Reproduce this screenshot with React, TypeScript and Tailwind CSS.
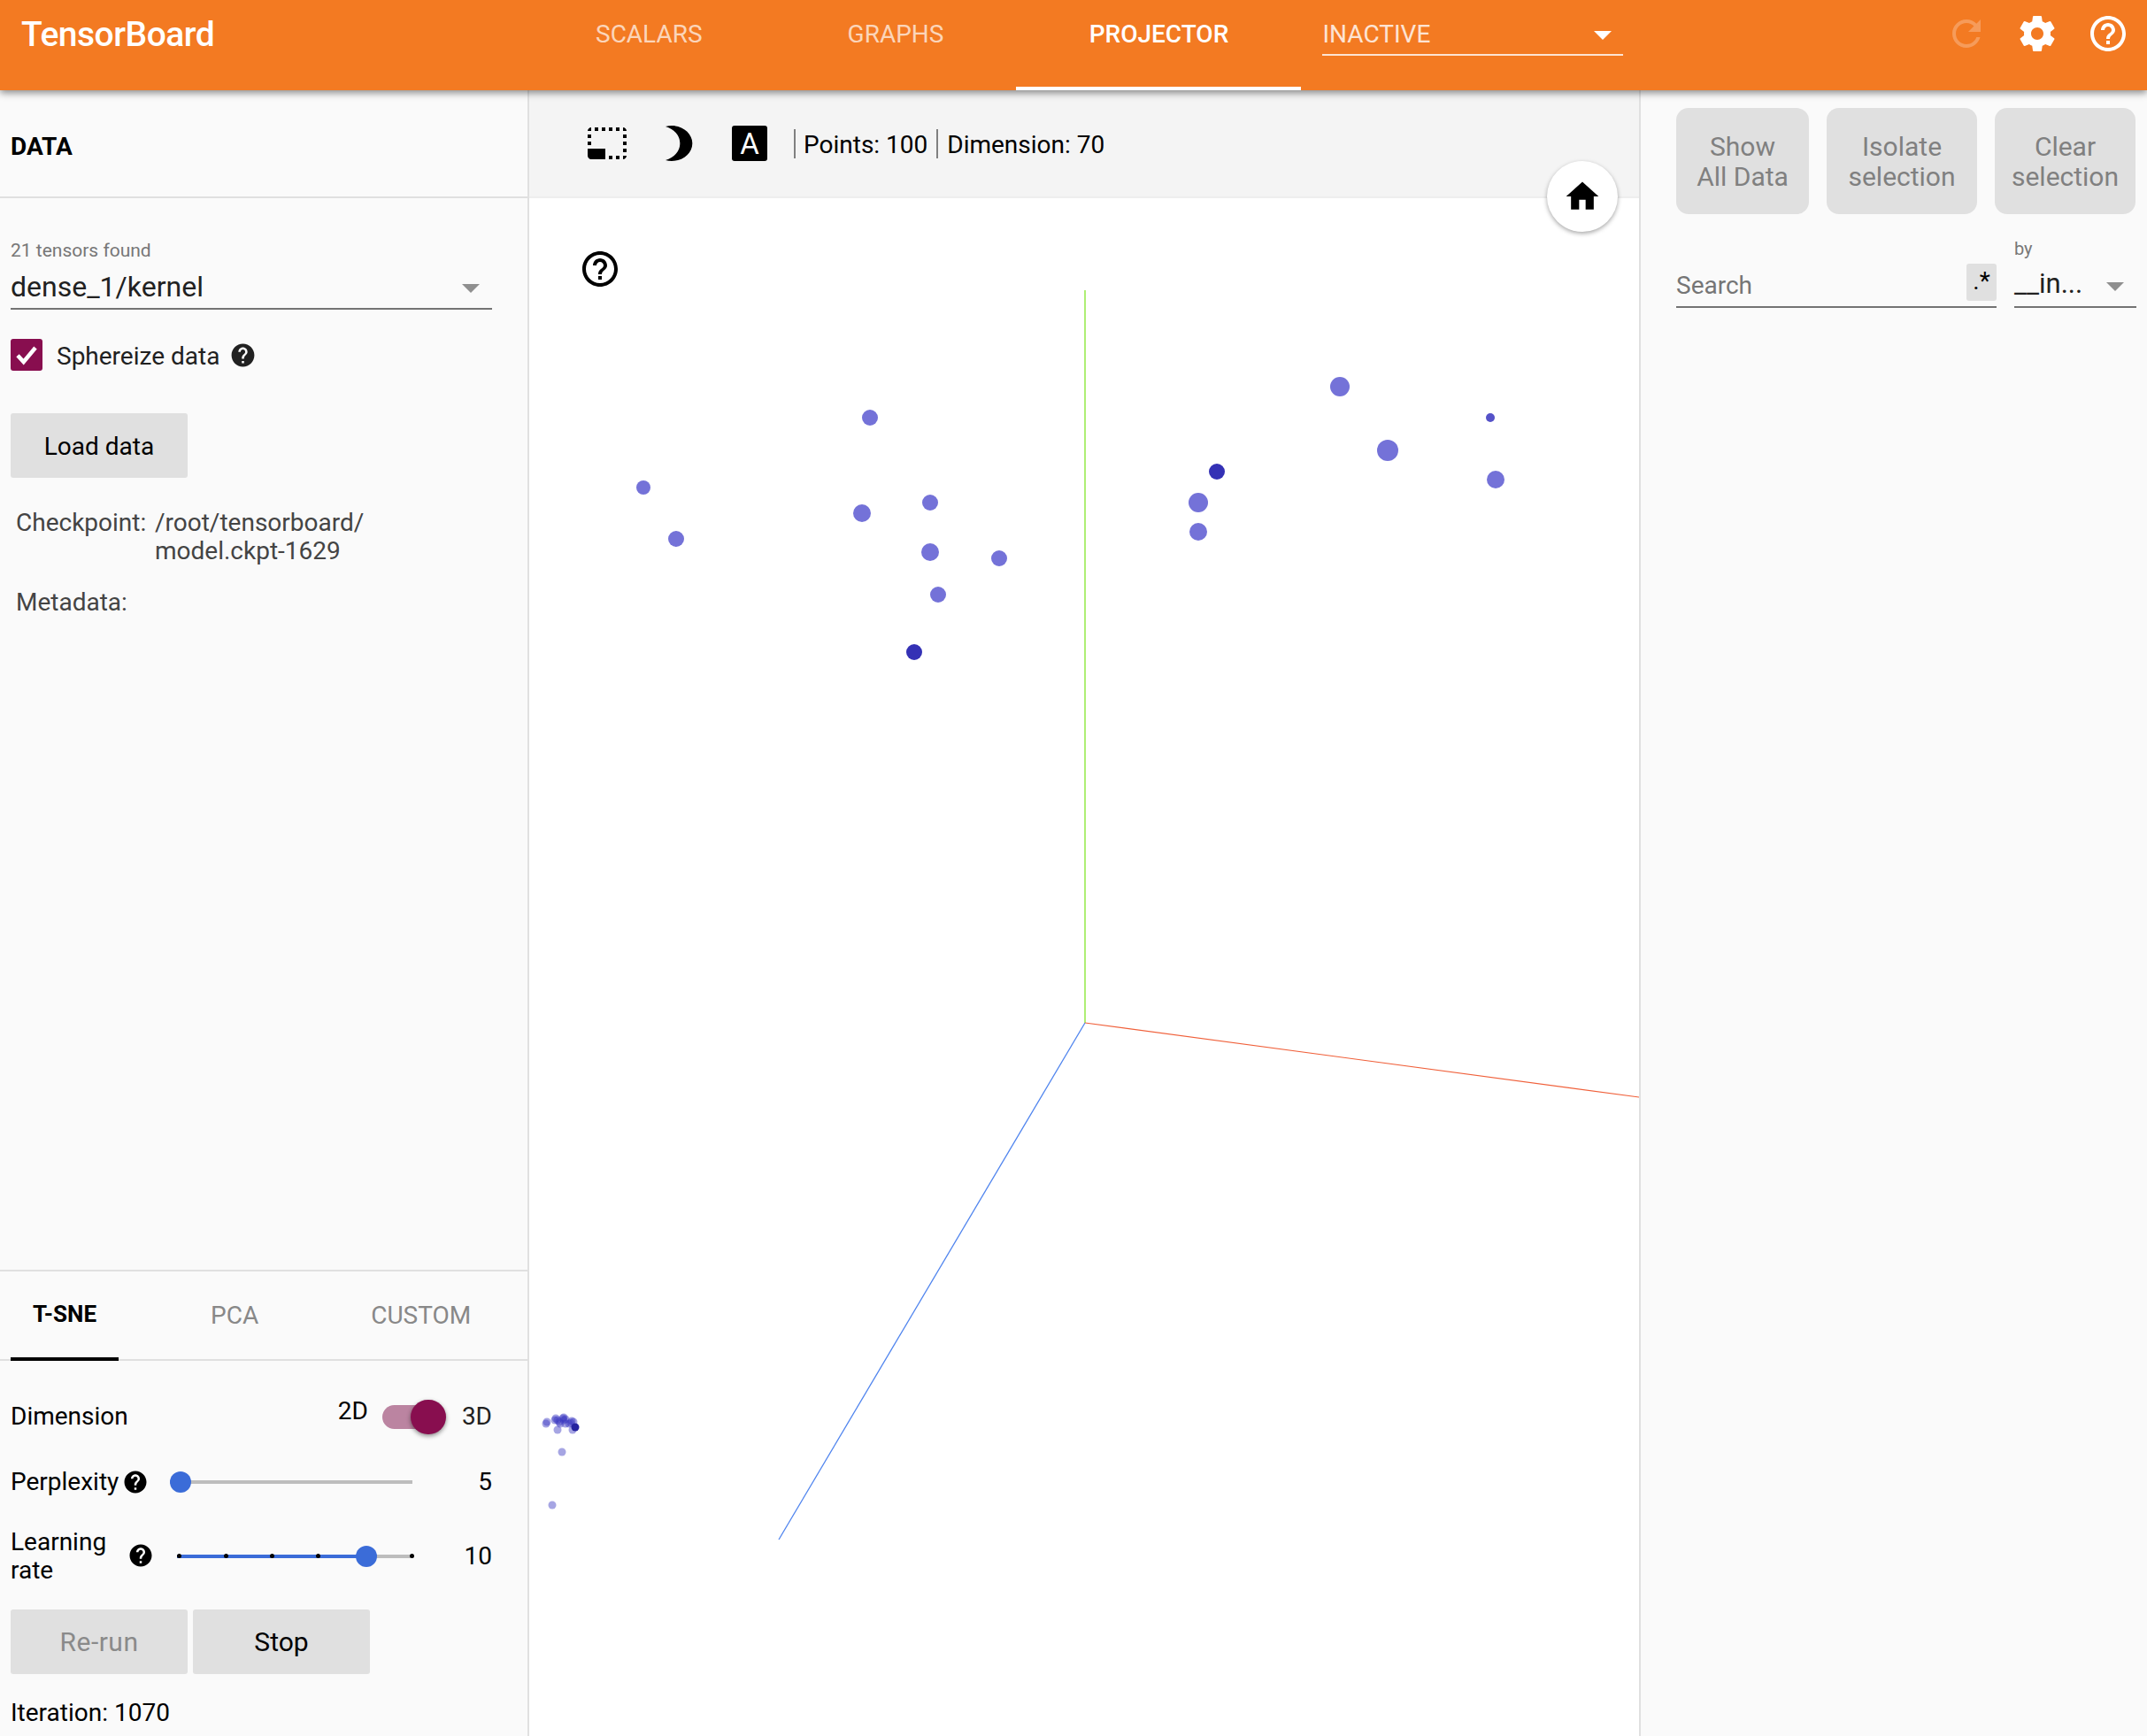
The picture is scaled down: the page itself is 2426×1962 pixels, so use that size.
// App.tsx
import React from 'react';

const HELP = 'M12 2C6.48 2 2 6.48 2 12s4.48 10 10 10 10-4.48 10-10S17.52 2 12 2zm1 17h-2v-2h2v2zm2.07-7.75l-.9.92C13.45 12.9 13 13.5 13 15h-2v-.5c0-1.1.45-2.1 1.17-2.83l1.24-1.26c.37-.36.59-.86.59-1.41 0-1.1-.9-2-2-2s-2 .9-2 2H8c0-2.21 1.79-4 4-4s4 1.79 4 4c0 .88-.36 1.68-.93 2.25z';
const HELP_OUTLINE = 'M11 18h2v-2h-2v2zm1-16C6.48 2 2 6.48 2 12s4.48 10 10 10 10-4.48 10-10S17.52 2 12 2zm0 18c-4.41 0-8-3.59-8-8s3.59-8 8-8 8 3.59 8 8-3.59 8-8 8zm0-14c-2.21 0-4 1.79-4 4h2c0-1.1.9-2 2-2s2 .9 2 2c0 2-3 1.75-3 5h2c0-2.25 3-2.5 3-5 0-2.21-1.79-4-4-4z';
const GEAR = 'M19.43 12.98c.04-.32.07-.64.07-.98s-.03-.66-.07-.98l2.11-1.65c.19-.15.24-.42.12-.64l-2-3.46c-.12-.22-.39-.3-.61-.22l-2.49 1c-.52-.4-1.08-.73-1.69-.98l-.38-2.65C14.46 2.18 14.25 2 14 2h-4c-.25 0-.46.18-.49.42l-.38 2.65c-.61.25-1.17.59-1.69.98l-2.49-1c-.23-.09-.49 0-.61.22l-2 3.46c-.13.22-.07.49.12.64l2.11 1.65c-.04.32-.07.65-.07.98s.03.66.07.98l-2.11 1.65c-.19.15-.24.42-.12.64l2 3.46c.12.22.39.3.61.22l2.49-1c.52.4 1.08.73 1.69.98l.38 2.65c.03.24.24.42.49.42h4c.25 0 .46-.18.49-.42l.38-2.65c.61-.25 1.17-.59 1.69-.98l2.49 1c.23.09.49 0 .61-.22l2-3.46c.12-.22.07-.49-.12-.64l-2.11-1.65zM12 15.5c-1.93 0-3.5-1.57-3.5-3.5s1.57-3.5 3.5-3.5 3.5 1.57 3.5 3.5-1.57 3.5-3.5 3.5z';
const REFRESH = 'M17.65 6.35C16.2 4.9 14.21 4 12 4c-4.42 0-7.99 3.58-7.99 8s3.57 8 7.99 8c3.73 0 6.84-2.55 7.73-6h-2.08c-.82 2.33-3.04 4-5.65 4-3.31 0-6-2.69-6-6s2.69-6 6-6c1.66 0 3.14.69 4.22 1.78L13 11h7V4l-2.35 2.35z';
const SELECT = 'M23 15h-2v2h2v-2zm0-4h-2v2h2v-2zm0 8h-2v2c1 0 2-1 2-2zM15 3h-2v2h2V3zm8 4h-2v2h2V7zm-2-4v2h2c0-1-1-2-2-2zM3 21h8v-6H1v4c0 1.1.9 2 2 2zM3 7H1v2h2V7zm12 12h-2v2h2v-2zm4-16h-2v2h2V3zm0 16h-2v2h2v-2zM3 3C2 3 1 4 1 5h2V3zm0 8H1v2h2v-2zm8-8H9v2h2V3zM7 3H5v2h2V3z';
const MOON = 'M9 2c-1.05 0-2.05.16-3 .46 4.06 1.27 7 5.06 7 9.54 0 4.48-2.94 8.27-7 9.54.95.3 1.95.46 3 .46 5.52 0 10-4.48 10-10S14.52 2 9 2z';
const HOME = 'M10 20v-6h4v6h5v-8h3L12 3 2 12h3v8z';

function Icon({ d, className }: { d: string; className?: string }) {
    return (
        <svg viewBox="0 0 24 24" fill="currentColor" className={className} preserveAspectRatio="none">
            <path d={d} />
        </svg>
    );
}

// canvas points, in page pixels relative to the projector panel
const points = [
    { x: 385, y: 370, r: 9, c: '#7472d8' },
    { x: 129, y: 449, r: 8, c: '#7472d8' },
    { x: 166, y: 507, r: 9, c: '#7472d8' },
    { x: 376, y: 478, r: 10, c: '#7472d8' },
    { x: 453, y: 466, r: 9, c: '#7472d8' },
    { x: 453, y: 522, r: 10, c: '#7472d8' },
    { x: 531, y: 529, r: 9, c: '#7472d8' },
    { x: 462, y: 570, r: 9, c: '#7472d8' },
    { x: 435, y: 635, r: 9, c: '#3431b5' },
    { x: 916, y: 335, r: 11, c: '#7472d8' },
    { x: 970, y: 407, r: 12, c: '#7472d8' },
    { x: 1086, y: 370, r: 5, c: '#5552c8' },
    { x: 1092, y: 440, r: 10, c: '#7472d8' },
    { x: 777, y: 431, r: 9, c: '#3431b5' },
    { x: 756, y: 466, r: 11, c: '#7472d8' },
    { x: 756, y: 499, r: 10, c: '#7472d8' },
];

// the far away cluster in the lower left corner
const cluster = [
    [19, 1507], [20, 1505], [30, 1501], [29, 1503], [32, 1503], [39, 1500], [39, 1503], [38, 1501], [41, 1502], [34, 1505],
    [48, 1504], [47, 1506], [50, 1505], [41, 1507], [35, 1507], [45, 1507], [32, 1514], [49, 1514], [37, 1539], [26, 1599],
];

function SliderRow({ children }: { children: React.ReactNode }) {
    return <div className="flex items-center text-black">{children}</div>;
}

export default function App() {
    return (
        <div className="flex h-[1962px] w-[2426px] flex-col overflow-hidden bg-white font-['Roboto',sans-serif] text-[28px]">
            <header className="relative z-10 flex h-[102px] shrink-0 bg-[#f37a22] shadow-[0_3px_8px_rgba(0,0,0,0.45)]">
                <div className="w-[591px] shrink-0 pl-6 pt-[16px] text-[39px] font-medium leading-[46px] tracking-[-0.5px] text-white">TensorBoard</div>
                <div className="flex">
                    <div className="h-full px-[82px] pt-[22px] text-[28px] leading-[34px] text-white/70">SCALARS</div>
                    <div className="h-full px-[82px] pt-[22px] text-[28px] leading-[34px] text-white/70">GRAPHS</div>
                    <div className="h-full w-[322px] border-b-4 border-white pt-[22px] text-center text-[28px] font-medium leading-[34px] text-white">PROJECTOR</div>
                </div>
                <div className="ml-6 mt-[21px] flex h-[42px] w-[340px] justify-between border-b-2 border-white/80 pt-px text-white/80">
                    <span className="leading-[34px]">INACTIVE</span>
                    <span className="mr-[13px] mt-[13px] h-0 w-0 border-x-[10px] border-t-[10px] border-x-transparent border-t-white" />
                </div>
                <div className="ml-auto mr-[20px] mt-[14px] flex h-12 gap-8 text-white">
                    <Icon d={REFRESH} className="h-12 w-12 opacity-25" />
                    <Icon d={GEAR} className="h-12 w-12" />
                    <Icon d={HELP_OUTLINE} className="h-12 w-12" />
                </div>
            </header>

            <div className="flex min-h-0 flex-1">
                {/* left panel */}
                <aside className="flex w-[598px] shrink-0 flex-col justify-between border-r-2 border-[#e0e0e0] bg-[#fafafa]">
                    <div>
                        <div className="flex h-[122px] items-center border-b-2 border-[#e0e0e0] pl-3 pt-[7px] text-[28px] font-bold text-black">DATA</div>
                        <div className="px-3">
                            <div className="mt-[47px] text-[21px] leading-6 text-[#777]">21 tensors found</div>
                            <div className="flex h-[55px] w-[544px] items-center justify-between border-b-2 border-[#737373] pt-1 text-[32px] text-[#212121]">
                                <span>dense_1/kernel</span>
                                <span className="mr-[14px] mt-1 h-0 w-0 border-x-[10px] border-t-[10px] border-x-transparent border-t-[#8f8f8f]" />
                            </div>
                            <div className="mt-[33px] flex h-9 items-center text-[#212121]">
                                <div className="flex h-9 w-9 items-center justify-center rounded-[3px] bg-[#880e4f]">
                                    <svg viewBox="0 0 24 24" fill="none" stroke="white" strokeWidth="3.4" className="h-8 w-8"><path d="M4.5 12.5l5 5.5L19.5 6" /></svg>
                                </div>
                                <span className="ml-4 pt-[3px]">Sphereize data</span>
                                <Icon d={HELP} className="ml-[11px] h-[31px] w-[31px]" />
                            </div>
                            <div className="mt-12 flex h-[73px] w-[200px] items-center justify-center rounded-[3px] bg-[#e0e0e0] pt-[2px] text-black">Load data</div>
                            <div className="mt-[35px] flex pl-[6px] leading-8 text-[#444]">
                                <span className="w-[157px]">Checkpoint:</span>
                                <span>/root/tensorboard/<br />model.ckpt-1629</span>
                            </div>
                            <div className="mt-[26px] pl-[6px] leading-8 text-[#444]">Metadata:</div>
                        </div>
                    </div>

                    <div className="border-t-2 border-[#e0e0e0]">
                        <div className="flex h-[101px] border-b-2 border-[#e0e0e0] pl-3">
                            <div className="flex h-[101px] w-[122px] justify-center border-b-4 border-black pt-[32px] text-[26px] font-bold leading-8 text-black">T-SNE</div>
                            <div className="ml-[104px] pt-[34px] text-[28px] leading-8 text-[#888]">PCA</div>
                            <div className="ml-[127px] pt-[34px] text-[28px] leading-8 text-[#888]">CUSTOM</div>
                        </div>
                        <div className="w-[568px] px-3 text-black">
                            <div className="mt-[43px] flex h-10 items-center">
                                <span>Dimension</span>
                                <span className="ml-auto -translate-y-[6px]">2D</span>
                                <div className="relative ml-4 h-[27px] w-[60px] rounded-full bg-[#bb84a1]">
                                    <div className="absolute -right-3 -top-[6px] h-[39px] w-[40px] rounded-full bg-[#880e4f] shadow-[0_2px_5px_rgba(0,0,0,0.45)]" />
                                </div>
                                <span className="ml-[30px] text-[#212121]">3D</span>
                            </div>
                            <div className="mt-[33px]">
                                <SliderRow>
                                    <span>Perplexity</span>
                                    <Icon d={HELP} className="ml-[4px] h-[30px] w-[30px]" />
                                    <div className="relative ml-6 h-1 w-[274px] bg-[#bdbdbd]">
                                        <div className="absolute -top-[10px] left-0 h-6 w-6 rounded-full bg-[#3b6cd8]" />
                                    </div>
                                    <span className="ml-auto">5</span>
                                </SliderRow>
                            </div>
                            <div className="mt-[31px]">
                                <SliderRow>
                                    <span className="w-[132px] leading-8">Learning<br />rate</span>
                                    <Icon d={HELP} className="-translate-y-px h-[30px] w-[30px]" />
                                    <div className="relative ml-[26px] h-1 w-[267px] bg-[#bdbdbd]">
                                        <div className="h-1 w-[214px] bg-[#3b6cd8]" />
                                        <span className="absolute -top-px left-0 h-[5px] w-[5px] rounded-full bg-black" />
                                        <span className="absolute -top-px left-[53px] h-[5px] w-[5px] rounded-full bg-black" />
                                        <span className="absolute -top-px left-[105px] h-[5px] w-[5px] rounded-full bg-black" />
                                        <span className="absolute -top-px left-[157px] h-[5px] w-[5px] rounded-full bg-black" />
                                        <span className="absolute -top-px left-[263px] h-[5px] w-[5px] rounded-full bg-black" />
                                        <div className="absolute -top-[10px] left-[202px] h-6 w-6 rounded-full bg-[#3b6cd8]" />
                                    </div>
                                    <span className="ml-auto">10</span>
                                </SliderRow>
                            </div>
                            <div className="mt-[28px] flex gap-[6px] text-[30px]">
                                <div className="flex h-[73px] w-[200px] items-center justify-center rounded-[3px] bg-[#e0e0e0] tracking-[0.5px] text-[#8a8a8a]">Re-run</div>
                                <div className="flex h-[73px] w-[200px] items-center justify-center rounded-[3px] bg-[#e0e0e0]">Stop</div>
                            </div>
                            <div className="mb-[10px] mt-[28px] leading-8">Iteration: 1070</div>
                        </div>
                    </div>
                </aside>

                {/* projector canvas */}
                <main className="relative min-w-0 flex-1 bg-white">
                    <div className="flex h-[122px] items-center border-b-2 border-[#eeeeee] bg-[#f4f4f4] text-black">
                        <Icon d={SELECT} className="ml-[64px] h-12 w-12" />
                        <Icon d={MOON} className="ml-[28px] h-12 w-[56px]" />
                        <div className="ml-[33px] flex h-10 w-10 items-center justify-center rounded-[3px] bg-black text-[33px] leading-none text-white">A</div>
                        <div className="ml-[30px] flex h-[33px] items-center border-l-2 border-[#808080] pl-[9px] pt-[3px]">Points: 100</div>
                        <div className="ml-[10px] flex h-[33px] items-center border-l-2 border-[#808080] pl-[10px] pt-[3px]">Dimension: 70</div>
                    </div>

                    <svg className="absolute left-0 top-0 h-[1860px] w-[1254px]" viewBox="0 0 1254 1860">
                        <line x1="628" y1="226" x2="628" y2="1054" stroke="#aeef74" strokeWidth="2" />
                        <line x1="628" y1="1054" x2="1254" y2="1138" stroke="#f0603a" strokeWidth="1.2" />
                        <line x1="628" y1="1054" x2="282" y2="1638" stroke="#4f84ee" strokeWidth="1.3" />
                        {points.map((p, i) => (
                            <circle key={i} cx={p.x} cy={p.y} r={p.r} fill={p.c} />
                        ))}
                        {cluster.map(([x, y], i) => (
                            <circle key={i} cx={x} cy={y} r="4.5" fill="#3a38c0" fillOpacity="0.45" />
                        ))}
                        <circle cx="52" cy="1511" r="4.5" fill="#25239f" />
                    </svg>

                    <Icon d={HELP_OUTLINE} className="absolute left-[56px] top-[178px] h-12 w-12 text-black" />
                    <div className="absolute left-[1150px] top-[80px] flex h-20 w-20 items-center justify-center rounded-full bg-white shadow-[0_2px_5px_rgba(0,0,0,0.35)]">
                        <Icon d={HOME} className="h-11 w-11 text-black" />
                    </div>
                </main>

                {/* right panel */}
                <aside className="w-[574px] shrink-0 border-l-2 border-[#e0e0e0] bg-[#fafafa] pl-[40px] pt-5">
                    <div className="flex gap-5 text-center text-[30px] leading-[34px] text-[#808080]">
                        <div className="flex h-[120px] w-[150px] items-center justify-center rounded-[14px] bg-[#e0e0e0] pt-px">Show<br />All Data</div>
                        <div className="flex h-[120px] w-[170px] items-center justify-center rounded-[14px] bg-[#e0e0e0] pt-px">Isolate<br />selection</div>
                        <div className="flex h-[120px] w-[159px] items-center justify-center rounded-[14px] bg-[#e0e0e0] pt-px">Clear<br />selection</div>
                    </div>
                    <div className="mt-[27px] flex gap-5">
                        <div className="mt-[29px] flex h-[50px] w-[362px] items-start justify-between border-b-2 border-[#737373] text-[#757575]">
                            <span className="pt-[10px] leading-[30px]">Search</span>
                            <span className="flex h-[42px] w-[34px] justify-center rounded-[3px] bg-[#e0e0e0] pt-[5px] leading-[30px] text-black">.*</span>
                        </div>
                        <div className="w-[138px]">
                            <div className="text-[20px] leading-6 text-[#777]">by</div>
                            <div className="flex h-[55px] items-center justify-between border-b-2 border-[#737373] pt-1 text-[#212121]">
                                <span className="text-[31px]">__in...</span>
                                <span className="mr-[14px] mt-1 h-0 w-0 border-x-[10px] border-t-[10px] border-x-transparent border-t-[#8f8f8f]" />
                            </div>
                        </div>
                    </div>
                </aside>
            </div>
        </div>
    );
}
